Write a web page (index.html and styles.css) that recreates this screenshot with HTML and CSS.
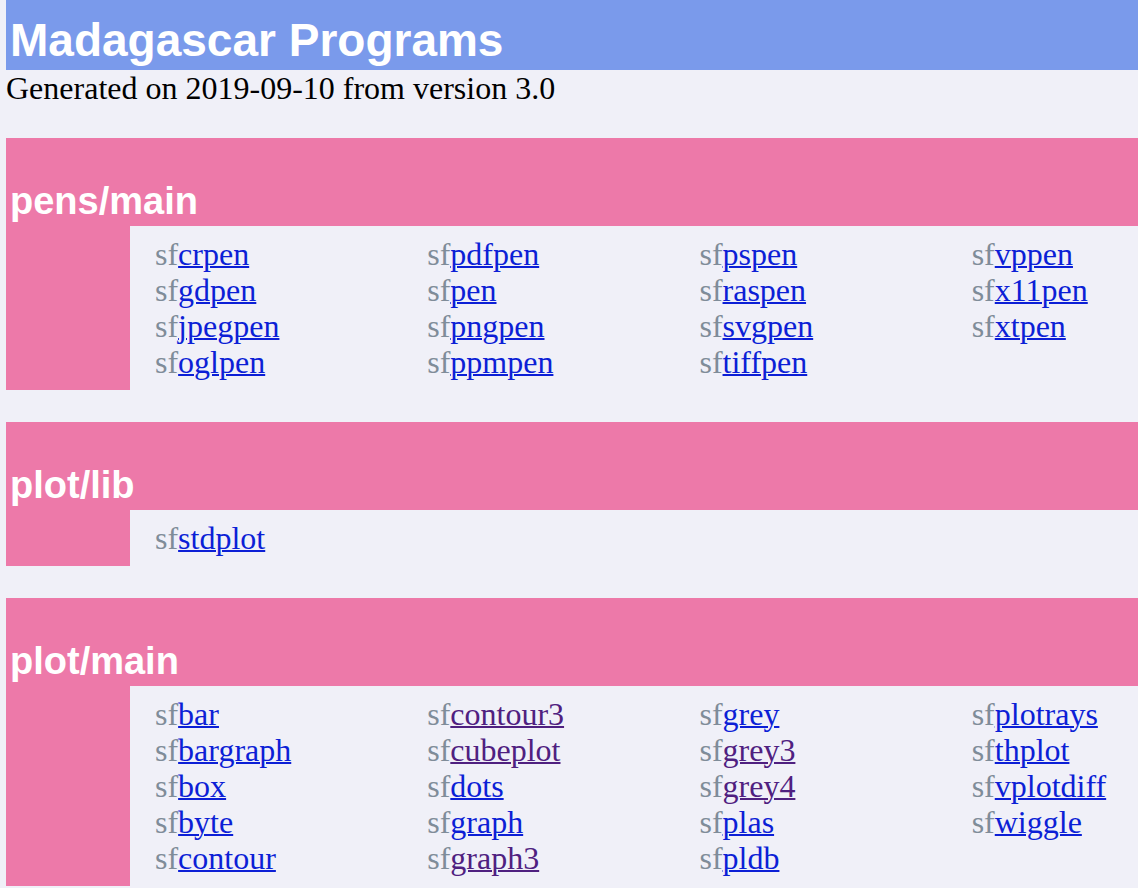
FILE: index.html
```html
<!DOCTYPE html>
<html lang="en">
<head>
<meta charset="utf-8">
<title>Madagascar Programs</title>
<link rel="stylesheet" href="styles.css">
</head>
<body>
<header class="banner"><h1 class="title">Madagascar Programs</h1></header>
<p class="generated">Generated on 2019-09-10 from version 3.0</p>
<main>
<section class="group">
<h2 class="group-title">pens/main</h2>
<div class="group-body">
<ul class="col"><li>sf<a href="#crpen">crpen</a></li><li>sf<a href="#gdpen">gdpen</a></li><li>sf<a href="#jpegpen">jpegpen</a></li><li>sf<a href="#oglpen">oglpen</a></li></ul>
<ul class="col"><li>sf<a href="#pdfpen">pdfpen</a></li><li>sf<a href="#pen">pen</a></li><li>sf<a href="#pngpen">pngpen</a></li><li>sf<a href="#ppmpen">ppmpen</a></li></ul>
<ul class="col"><li>sf<a href="#pspen">pspen</a></li><li>sf<a href="#raspen">raspen</a></li><li>sf<a href="#svgpen">svgpen</a></li><li>sf<a href="#tiffpen">tiffpen</a></li></ul>
<ul class="col"><li>sf<a href="#vppen">vppen</a></li><li>sf<a href="#x11pen">x11pen</a></li><li>sf<a href="#xtpen">xtpen</a></li></ul>
</div>
</section>
<section class="group">
<h2 class="group-title">plot/lib</h2>
<div class="group-body">
<ul class="col"><li>sf<a href="#stdplot">stdplot</a></li></ul>
</div>
</section>
<section class="group">
<h2 class="group-title">plot/main</h2>
<div class="group-body">
<ul class="col"><li>sf<a href="#bar">bar</a></li><li>sf<a href="#bargraph">bargraph</a></li><li>sf<a href="#box">box</a></li><li>sf<a href="#byte">byte</a></li><li>sf<a href="#contour">contour</a></li></ul>
<ul class="col"><li>sf<a class="seen" href="#contour3">contour3</a></li><li>sf<a class="seen" href="#cubeplot">cubeplot</a></li><li>sf<a href="#dots">dots</a></li><li>sf<a href="#graph">graph</a></li><li>sf<a class="seen" href="#graph3">graph3</a></li></ul>
<ul class="col"><li>sf<a href="#grey">grey</a></li><li>sf<a class="seen" href="#grey3">grey3</a></li><li>sf<a class="seen" href="#grey4">grey4</a></li><li>sf<a href="#plas">plas</a></li><li>sf<a href="#pldb">pldb</a></li></ul>
<ul class="col"><li>sf<a href="#plotrays">plotrays</a></li><li>sf<a href="#thplot">thplot</a></li><li>sf<a href="#vplotdiff">vplotdiff</a></li><li>sf<a href="#wiggle">wiggle</a></li></ul>
</div>
</section>
</main>
</body>
</html>
```
FILE: styles.css
```css
body {
  margin: 0 0 0 6px;
  background: #f0f0f8;
  color: #000;
  font: 32px/36px "Liberation Serif", "Times New Roman", serif;
}
.banner {
  padding: 10px 4px 0;
  background: #7a9aeb;
  color: #fff;
}
.title {
  margin: 0;
  font: bold 46px/60px "Liberation Sans", Helvetica, Arial, sans-serif;
}
.generated {
  margin: 0 0 32px;
}
.group {
  margin-bottom: 32px;
}
.group-title {
  margin: 0;
  padding: 38px 4px 0;
  background: #ed79a9;
  color: #fff;
  font: bold 38px/50px "Liberation Sans", Helvetica, Arial, sans-serif;
}
.group-body {
  display: grid;
  grid-template-columns: 18fr 18fr 18fr 11fr;
  padding: 10px 0 10px 25px;
  border-left: 124px solid #ed79a9;
  color: #7f8c99;
}
.col {
  margin: 0;
  padding: 0;
  list-style: none;
}
a {
  color: #0c1fd6;
  text-decoration-thickness: 2px;
}
.seen {
  color: #4f2080;
}
.group:last-child {
  margin-bottom: 0;
}
```
